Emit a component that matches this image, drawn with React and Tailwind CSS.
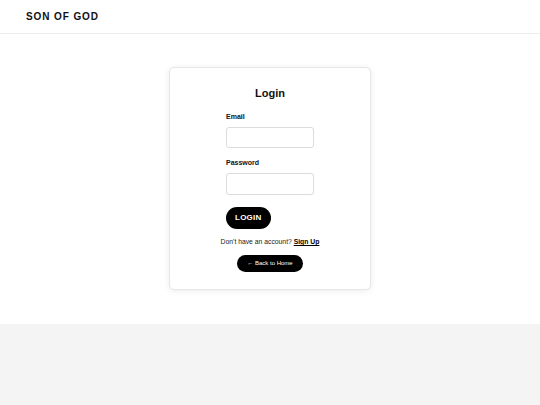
import React, { useState } from 'react';

const Header = () => (
  <header className="h-[34px] border-b border-[#ededed] bg-white flex items-center px-[26px]">
    <span className="text-[10px] font-bold tracking-[0.09em] text-[#111]">SON OF GOD</span>
  </header>
);

const LoginCard = () => {
  const [email, setEmail] = useState('');
  const [password, setPassword] = useState('');

  return (
    <div className="w-[202px] bg-white border border-[#e6e6e6] rounded-[5px] shadow-[0_1px_6px_rgba(0,0,0,0.08)] pt-[18px] pb-[17px] flex flex-col items-center">
      <h2 className="text-[11px] leading-[14px] font-bold text-[#111]">Login</h2>

      <form className="w-[88px] mt-[12px] flex flex-col" onSubmit={(e) => e.preventDefault()}>
        <label className="text-[7px] leading-[9px] font-bold text-[#111]">Email</label>
        <input
          type="email"
          value={email}
          onChange={(e) => setEmail(e.target.value)}
          className="mt-[6px] h-[21px] w-full border border-[#dcdcdc] rounded-[3px] bg-white focus:outline-none"
        />

        <label className="mt-[10px] text-[7px] leading-[9px] font-bold text-[#111]">Password</label>
        <input
          type="password"
          value={password}
          onChange={(e) => setPassword(e.target.value)}
          className="mt-[6px] h-[22px] w-full border border-[#dcdcdc] rounded-[3px] bg-white focus:outline-none"
        />

        <button
          type="submit"
          className="mt-[12px] self-start h-[22px] px-[9px] rounded-full bg-black text-white text-[8px] font-bold tracking-[0.03em]"
        >
          LOGIN
        </button>
      </form>

      <p className="mt-[8px] text-[6.8px] leading-[9px] text-[#222]">
        Don't have an account? <a href="#" className="font-bold underline text-black">Sign Up</a>
      </p>

      <button className="mt-[9px] h-[17px] px-[10.5px] rounded-full bg-black text-white text-[6px]">
        ← Back to Home
      </button>
    </div>
  );
};

export default function App() {
  return (
    <div className="min-h-[405px] flex flex-col bg-white" style={{ fontFamily: '"Liberation Sans", Arial, sans-serif' }}>
      <Header />
      <main className="h-[290px] flex justify-center items-start pt-[33px]">
        <LoginCard />
      </main>
      <footer className="flex-1 bg-[#f4f4f4]" />
    </div>
  );
}
